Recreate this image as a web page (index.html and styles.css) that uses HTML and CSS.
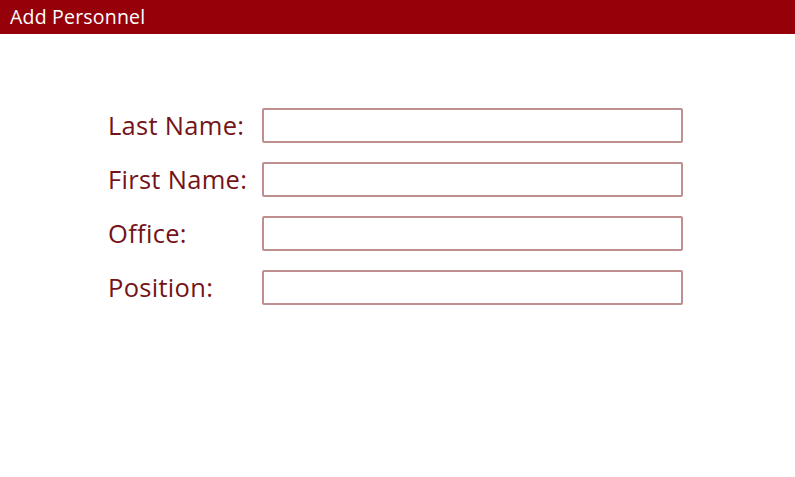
FILE: index.html
```html
<!DOCTYPE html>
<html>
<head>
<meta charset="utf-8">
<link rel="stylesheet" href="styles.css">
</head>
<body>
<div class="header">Add Personnel</div>
<form class="form">
  <div class="row"><label class="label">Last Name:</label><input class="field" type="text"></div>
  <div class="row"><label class="label">First Name:</label><input class="field" type="text"></div>
  <div class="row"><label class="label">Office:</label><input class="field" type="text"></div>
  <div class="row"><label class="label">Position:</label><input class="field" type="text"></div>
</form>
</body>
</html>
```
FILE: styles.css
```css
html, body {
  margin: 0;
  padding: 0;
  background: #ffffff;
  font-family: "Open Sans", "Noto Sans", sans-serif;
}
.header {
  height: 34px;
  background: #960008;
  color: #ffffff;
  font-size: 19.5px;
  letter-spacing: 0.2px;
  line-height: 34px;
  padding-left: 10px;
  box-sizing: border-box;
}
.form {
  display: flex;
  flex-direction: column;
  gap: 19px;
  padding-top: 74px;
  padding-left: 108px;
}
.row {
  display: flex;
  align-items: center;
  height: 35px;
}
.label {
  width: 154px;
  color: #741419;
  font-size: 25.5px;
  letter-spacing: 0.3px;
  line-height: 35px;
  white-space: nowrap;
}
.field {
  width: 421px;
  height: 35px;
  box-sizing: border-box;
  border: 2px solid #bf8e8e;
  border-radius: 2px;
  margin: 0;
  padding: 0 6px;
  background: #fff;
  outline: none;
}
```
